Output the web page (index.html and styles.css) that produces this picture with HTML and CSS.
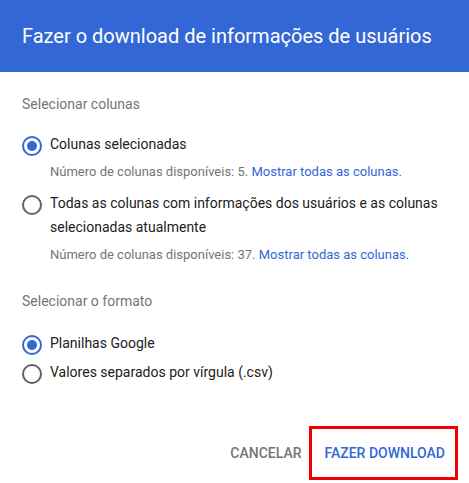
FILE: index.html
```html
<!DOCTYPE html>
<html>
<head>
    <title>Fazer o download de informações de usuários</title>
    <link rel="stylesheet" href="styles.css">
</head>
<body>
    <div class="dialog">
        <div class="dialog-header">
            <h1>Fazer o download de informações de usuários</h1>
        </div>

        <div class="dialog-body">
            <div class="section-label">Selecionar colunas</div>

            <div class="option">
                <span class="radio checked"></span>
                <div class="option-text">
                    <div class="option-label">Colunas selecionadas</div>
                    <div class="hint">Número de colunas disponíveis: 5. <a href="#">Mostrar todas as colunas.</a></div>
                </div>
            </div>

            <div class="option">
                <span class="radio"></span>
                <div class="option-text">
                    <div class="option-label">Todas as colunas com informações dos usuários e as colunas selecionadas atualmente</div>
                    <div class="hint">Número de colunas disponíveis: 37. <a href="#">Mostrar todas as colunas.</a></div>
                </div>
            </div>

            <div class="section-label format-label">Selecionar o formato</div>

            <div class="option compact">
                <span class="radio checked"></span>
                <div class="option-label">Planilhas Google</div>
            </div>
            <div class="option compact">
                <span class="radio"></span>
                <div class="option-label">Valores separados por vírgula (.csv)</div>
            </div>
        </div>

        <div class="dialog-actions">
            <button class="btn btn-cancel">Cancelar</button>
            <button class="btn btn-primary highlighted">Fazer download</button>
        </div>
    </div>
</body>
</html>
```

FILE: styles.css
```css
body {
    margin: 0;
    font-family: Roboto, "Liberation Sans", Arial, sans-serif;
    background-color: #fff;
    color: #212121;
}

.dialog {
    width: 469px;
    height: 483px;
    display: flex;
    flex-direction: column;
}

.dialog-header {
    background-color: #3367d6;
    height: 72px;
    padding: 0 22px;
    display: flex;
    align-items: center;
}

.dialog-header h1 {
    margin: 0;
    color: #fff;
    font-size: 20px;
    font-weight: 400;
}

.dialog-body {
    padding: 22px 22px 0 22px;
    flex: 1;
}

.section-label {
    font-size: 14px;
    color: #757575;
    line-height: 20px;
    margin-bottom: 20px;
}

.format-label {
    margin-top: 23px;
    margin-bottom: 22px;
}

.option {
    display: flex;
    align-items: flex-start;
    gap: 8px;
    margin-bottom: 8px;
}

.option.compact {
    margin-bottom: 7px;
}

.radio {
    flex: none;
    width: 16px;
    height: 16px;
    border: 2px solid #616161;
    border-radius: 50%;
    margin-top: 2px;
    position: relative;
}

.radio.checked {
    border-color: #3367d6;
}

.radio.checked::after {
    content: "";
    position: absolute;
    left: 3px;
    top: 3px;
    width: 10px;
    height: 10px;
    border-radius: 50%;
    background-color: #3367d6;
}

.option-label {
    font-size: 14px;
    line-height: 24px;
    margin-top: -2px;
}

.hint {
    font-size: 13px;
    line-height: 16px;
    color: #757575;
    margin-top: 8px;
    margin-bottom: 5px;
}

.hint a {
    color: #3367d6;
    text-decoration: none;
}

.dialog-actions {
    display: flex;
    justify-content: flex-end;
    align-items: center;
    padding: 0 11px 3px 0;
}

.btn {
    background: none;
    border: none;
    font-family: inherit;
    font-size: 14px;
    font-weight: 500;
    text-transform: uppercase;
    padding: 0 8px;
    height: 36px;
    cursor: pointer;
}

.btn-cancel {
    color: #757575;
}

.btn-primary {
    color: #3367d6;
}

.highlighted {
    border: 3px solid #f00000;
    height: 54px;
    padding: 0 10px 0 12px;
}
```
